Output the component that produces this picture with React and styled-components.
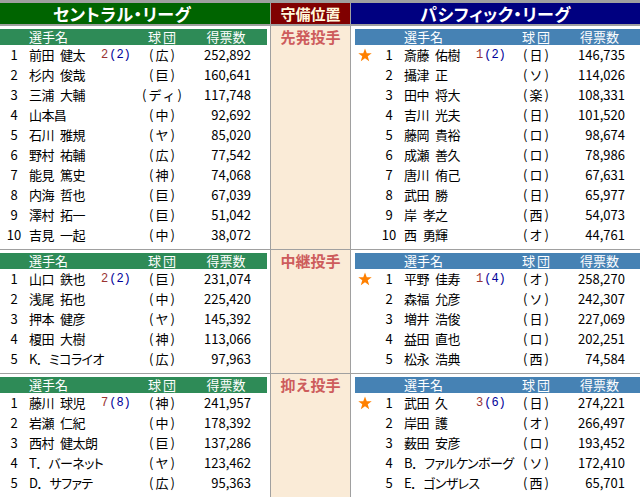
import styled, { createGlobalStyle } from "styled-components";

const GlobalStyle = createGlobalStyle`
  html, body {
    margin: 0;
    padding: 0;
    background: #a0a0a0;
  }
  body {
    font-family: "Noto Sans CJK JP", "Noto Sans", sans-serif;
    font-size: 13px;
    color: #000;
  }
`;

const CENTRAL_COLS = "28px 73px 39px 44px 67px 1fr";
const PACIFIC_COLS = "20px 28px 73px 39px 42px 68px 1fr";

const sections = [
  {
    label: "先発投手",
    central: [
      ["前田 健太", "2", "2", "広", "252,892"],
      ["杉内 俊哉", "", "", "巨", "160,641"],
      ["三浦 大輔", "", "", "ディ", "117,748"],
      ["山本昌", "", "", "中", "92,692"],
      ["石川 雅規", "", "", "ヤ", "85,020"],
      ["野村 祐輔", "", "", "広", "77,542"],
      ["能見 篤史", "", "", "神", "74,068"],
      ["内海 哲也", "", "", "巨", "67,039"],
      ["澤村 拓一", "", "", "巨", "51,042"],
      ["吉見 一起", "", "", "中", "38,072"],
    ],
    pacific: [
      ["斎藤 佑樹", "1", "2", "日", "146,735"],
      ["攝津 正", "", "", "ソ", "114,026"],
      ["田中 将大", "", "", "楽", "108,331"],
      ["吉川 光夫", "", "", "日", "101,520"],
      ["藤岡 貴裕", "", "", "ロ", "98,674"],
      ["成瀬 善久", "", "", "ロ", "78,986"],
      ["唐川 侑己", "", "", "ロ", "67,631"],
      ["武田 勝", "", "", "日", "65,977"],
      ["岸 孝之", "", "", "西", "54,073"],
      ["西 勇輝", "", "", "オ", "44,761"],
    ],
  },
  {
    label: "中継投手",
    central: [
      ["山口 鉄也", "2", "2", "巨", "231,074"],
      ["浅尾 拓也", "", "", "中", "225,420"],
      ["押本 健彦", "", "", "ヤ", "145,392"],
      ["榎田 大樹", "", "", "神", "113,066"],
      ["K． ミコライオ", "", "", "広", "97,963"],
    ],
    pacific: [
      ["平野 佳寿", "1", "4", "オ", "258,270"],
      ["森福 允彦", "", "", "ソ", "242,307"],
      ["増井 浩俊", "", "", "日", "227,069"],
      ["益田 直也", "", "", "ロ", "202,251"],
      ["松永 浩典", "", "", "西", "74,584"],
    ],
  },
  {
    label: "抑え投手",
    central: [
      ["藤川 球児", "7", "8", "神", "241,957"],
      ["岩瀬 仁紀", "", "", "中", "178,392"],
      ["西村 健太朗", "", "", "巨", "137,286"],
      ["T． バーネット", "", "", "ヤ", "123,462"],
      ["D． サファテ", "", "", "広", "95,363"],
    ],
    pacific: [
      ["武田 久", "3", "6", "日", "274,221"],
      ["岸田 護", "", "", "オ", "266,497"],
      ["薮田 安彦", "", "", "ロ", "193,452"],
      ["B． ファルケンボーグ", "", "", "ソ", "172,410"],
      ["E． ゴンザレス", "", "", "西", "65,701"],
    ],
  },
];

function Star() {
  return (
    <svg width="14" height="14" viewBox="0 0 24 24">
      <polygon
        points="12,1 15,9 23.5,9 16.7,14.2 19.2,22.5 12,17.5 4.8,22.5 7.3,14.2 0.5,9 9,9"
        fill="#ff8000"
      />
    </svg>
  );
}

function LeagueBlock({ rows, pacific }) {
  const cols = pacific ? PACIFIC_COLS : CENTRAL_COLS;
  return (
    <LeagueCell $pacific={pacific}>
      <ColumnBar $cols={cols} $bg={pacific ? "#4682b4" : "#2e8b57"}>
        {pacific && <span />}
        <span />
        <BarName>選手名</BarName>
        <span />
        <Team>球団</Team>
        <BarCount>得票数</BarCount>
      </ColumnBar>
      {rows.map((r, i) => (
        <Row key={i} $cols={cols}>
          {pacific && <StarCell>{i === 0 && <Star />}</StarCell>}
          <Num>{i + 1}</Num>
          <Name>{r[0]}</Name>
          <Badge>
            {r[1] && (
              <>
                <Wins>{r[1]}</Wins>
                <Total>({r[2]})</Total>
              </>
            )}
          </Badge>
          <Team>({r[3]})</Team>
          <Count>{r[4]}</Count>
        </Row>
      ))}
    </LeagueCell>
  );
}

export default function App() {
  return (
    <>
      <GlobalStyle />
      <Board>
        <HeaderRow>
          <LeagueTitle $bg="#006400" $shift>
            セントラル・リーグ
          </LeagueTitle>
          <PositionTitle>守備位置</PositionTitle>
          <LeagueTitle $bg="#000080">パシフィック・リーグ</LeagueTitle>
        </HeaderRow>
        {sections.map((s) => (
          <Section key={s.label}>
            <LeagueBlock rows={s.central} />
            <PositionCell>
              <PositionLabel>{s.label}</PositionLabel>
            </PositionCell>
            <LeagueBlock rows={s.pacific} pacific />
          </Section>
        ))}
      </Board>
    </>
  );
}

const Board = styled.div`
  width: 640px;
  height: 497px;
  overflow: hidden;
  background: #a0a0a0;
  padding-top: 3px;
  box-sizing: border-box;
  display: flex;
  flex-direction: column;
  gap: 1px;
`;

const Grid3 = styled.div`
  display: grid;
  grid-template-columns: 270px 79px 289px;
  column-gap: 1px;
`;

const HeaderRow = styled(Grid3)`
  height: 21px;
  margin-bottom: 1px;
`;

const LeagueTitle = styled.div`
  background: ${(p) => p.$bg};
  color: #fff;
  font-size: 17px;
  font-weight: 700;
  font-feature-settings: "palt";
  letter-spacing: 0.5px;
  line-height: 21px;
  text-align: center;
  padding-right: ${(p) => (p.$shift ? "26px" : "0")};
  white-space: nowrap;
`;

const PositionTitle = styled.div`
  background: #800000;
  color: #fff8dc;
  font-size: 15px;
  font-weight: 700;
  line-height: 21px;
  text-align: center;
`;

const Section = styled(Grid3)``;

const LeagueCell = styled.div`
  background: #fff;
  padding: ${(p) => (p.$pacific ? "3px 0 4px 4px" : "3px 3px 4px 0")};
`;

const PositionCell = styled.div`
  background: #faebd7;
  padding-top: 3px;
`;

const PositionLabel = styled.div`
  color: #cd5c5c;
  font-size: 15px;
  font-weight: 700;
  line-height: 16px;
  text-align: center;
`;

const ColumnBar = styled.div`
  display: grid;
  grid-template-columns: ${(p) => p.$cols};
  height: 16px;
  line-height: 16px;
  background: ${(p) => p.$bg};
  color: #fff;
  font-size: 13px;
`;

const BarName = styled.span`
  padding-left: 1px;
`;

const BarCount = styled.span`
  padding-left: 17px;
  text-align: center;
`;

const Row = styled.div`
  display: grid;
  grid-template-columns: ${(p) => p.$cols};
  height: 20px;
  line-height: 20px;
  white-space: nowrap;
`;

const StarCell = styled.span`
  display: flex;
  align-items: center;
  justify-content: center;
`;

const Num = styled.span`
  text-align: center;
`;

const Name = styled.span`
  padding-left: 1px;
  word-spacing: 4px;
  letter-spacing: -0.6px;
  font-feature-settings: "palt";
`;

const Badge = styled.span`
  font-family: "Liberation Mono", "DejaVu Sans Mono", monospace;
  font-size: 12px;
`;

const Wins = styled.span`
  color: #993333;
  margin-right: 1px;
`;

const Total = styled.span`
  color: #000099;
`;

const Team = styled.span`
  text-align: center;
  letter-spacing: 2px;
  padding-left: 2px;
`;

const Count = styled.span`
  text-align: right;
`;
